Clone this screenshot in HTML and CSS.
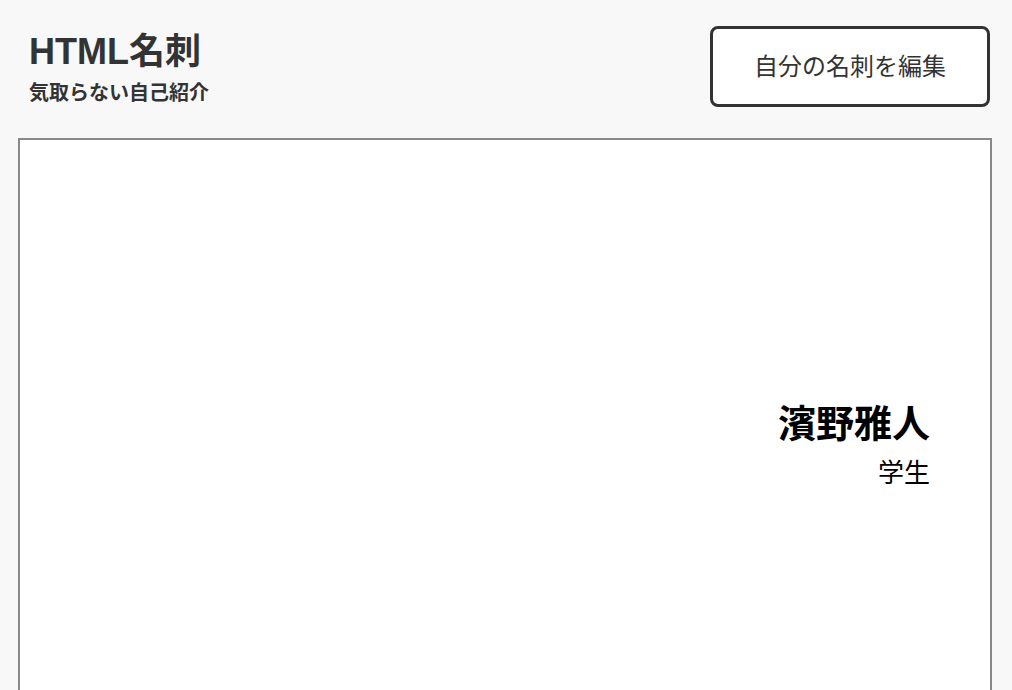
FILE: index.html
```html
<!DOCTYPE html>
<html lang="ja">
<head>
<meta charset="utf-8">
<title>HTML名刺</title>
<link rel="stylesheet" href="styles.css">
</head>
<body>
<div class="page">
  <header class="header">
    <div class="brand">
      <h1 class="brand-title">HTML名刺</h1>
      <p class="brand-sub">気取らない自己紹介</p>
    </div>
    <button class="edit-btn" type="button">自分の名刺を編集</button>
  </header>
  <main class="card">
    <div class="card-body">
      <div class="card-name">濱野雅人</div>
      <div class="card-role">学生</div>
    </div>
  </main>
</div>
</body>
</html>
```

FILE: styles.css
```css
html, body {
  margin: 0;
  padding: 0;
  background: #f8f8f8;
}
body {
  font-family: "Liberation Sans", "Noto Sans CJK JP", sans-serif;
  color: #333;
}
.page {
  padding: 0 20px 0 18px;
}
.header {
  display: flex;
  justify-content: space-between;
  align-items: flex-start;
  padding: 26px 2px 0 11px;
}
.brand {
  padding-top: 6px;
}
.brand-title {
  margin: 0;
  font-size: 36px;
  font-weight: 700;
  line-height: 40px;
  color: #333;
}
.brand-sub {
  margin: 8px 0 0;
  font-size: 20px;
  font-weight: 700;
  line-height: 26px;
  color: #333;
}
.edit-btn {
  width: 280px;
  height: 81px;
  box-sizing: border-box;
  border: 3px solid #333;
  border-radius: 8px;
  background: #fff;
  color: #333;
  font-family: inherit;
  font-size: 24px;
  font-weight: 400;
  padding: 0 0 4px;
}
.card {
  margin-top: 31px;
  box-sizing: border-box;
  width: 974px;
  height: 590px;
  border: 2px solid #888;
  background: #fff;
  display: flex;
  align-items: center;
  justify-content: flex-end;
  padding-right: 60px;
}
.card-body {
  text-align: right;
  margin-top: 28px;
}
.card-name {
  font-size: 38px;
  font-weight: 700;
  line-height: 46px;
  color: #000;
}
.card-role {
  margin-top: 6px;
  font-size: 26px;
  font-weight: 400;
  line-height: 40px;
  color: #000;
}
```
